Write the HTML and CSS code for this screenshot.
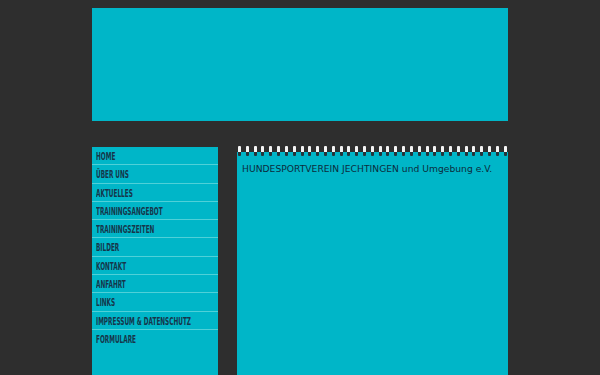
FILE: index.html
```html
<!DOCTYPE html>
<html>
<head>
<meta charset="utf-8">
<link rel="stylesheet" href="styles.css">
</head>
<body>
<div class="page">
  <div class="header"></div>
  <div class="main">
    <nav class="sidebar">
      <a class="item"><span>HOME</span></a>
      <a class="item"><span>ÜBER UNS</span></a>
      <a class="item"><span>AKTUELLES</span></a>
      <a class="item"><span>TRAININGSANGEBOT</span></a>
      <a class="item"><span>TRAININGSZEITEN</span></a>
      <a class="item"><span>BILDER</span></a>
      <a class="item"><span>KONTAKT</span></a>
      <a class="item"><span>ANFAHRT</span></a>
      <a class="item"><span>LINKS</span></a>
      <a class="item"><span>IMPRESSUM &amp; DATENSCHUTZ</span></a>
      <a class="item last"><span>FORMULARE</span></a>
    </nav>
    <div class="content">
      <div class="rings">
        <span></span><span></span><span></span><span></span><span></span><span></span><span></span><span></span><span></span><span></span><span></span><span></span><span></span><span></span><span></span><span></span><span></span><span></span><span></span><span></span><span></span><span></span><span></span><span></span><span></span><span></span><span></span><span></span><span></span><span></span><span></span><span></span><span></span><span></span><span></span>
      </div>
      <p class="title">HUNDESPORTVEREIN JECHTINGEN und Umgebung e.V.</p>
    </div>
  </div>
</div>
</body>
</html>
```
FILE: styles.css
```css
html, body {
  margin: 0;
  padding: 0;
  background: #2e2e2e;
  height: 100%;
  overflow: hidden;
}
.page {
  width: 416px;
  margin: 0 auto;
  padding-top: 8px;
  display: flex;
  flex-direction: column;
  gap: 26px;
}
.header {
  height: 113px;
  background: #00b6c8;
}
.main {
  display: flex;
  gap: 19px;
  align-items: flex-start;
}
.sidebar {
  width: 126px;
  height: 240px;
  background: #00b6c8;
  display: flex;
  flex-direction: column;
}
.item {
  display: block;
  height: 17.3px;
  line-height: 19.5px;
  overflow: hidden;
  border-bottom: 1px solid #4fd0d8;
  padding-left: 4px;
  font-family: "DejaVu Sans Condensed", "DejaVu Sans", sans-serif;
  font-weight: bold;
  font-size: 11px;
  color: #16354a;
  white-space: nowrap;
}
.item span {
  display: inline-block;
  transform: scaleX(0.58);
  transform-origin: left center;
}
.item.last {
  border-bottom: none;
}
.content {
  position: relative;
  width: 271px;
  height: 230px;
  margin-top: 5px;
  background: #00b6c8;
}
.rings {
  position: absolute;
  left: 1px;
  right: 1px;
  top: -6px;
  display: flex;
  justify-content: space-between;
}
.rings span {
  width: 3px;
  height: 10px;
  background: linear-gradient(#f4f4f4 0, #f4f4f4 6px, #25343a 6px, #25343a 10px);
  border-radius: 1px;
}
.title {
  margin: 0;
  padding: 11px 0 0 5px;
  font-family: "DejaVu Sans", sans-serif;
  font-size: 9.2px;
  color: #0c2c3c;
}
```
